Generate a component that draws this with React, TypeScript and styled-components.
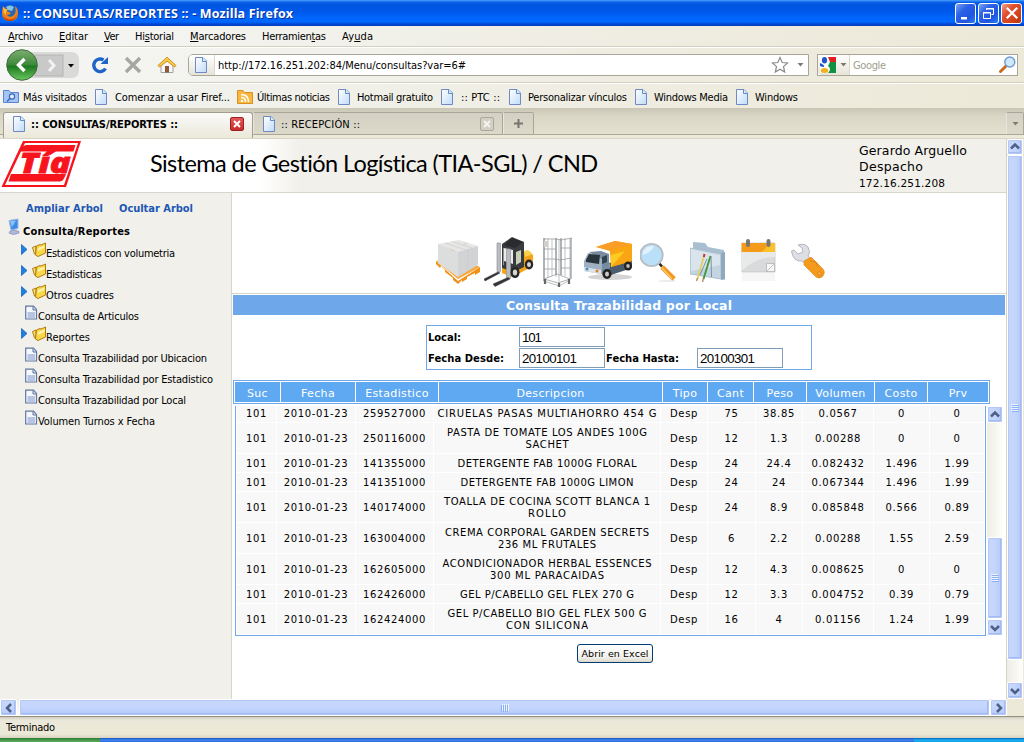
import React, { useLayoutEffect, useRef, useState } from "react";
import styled, { createGlobalStyle, css } from "styled-components";

const tahoma = `"DejaVu Sans Condensed", "DejaVu Sans", sans-serif`;
const verdana = `"DejaVu Sans", sans-serif`;

const Global = createGlobalStyle`
  * { box-sizing: border-box; }
  body { margin: 0; overflow: hidden; background: #ece9d8; font: 11px/14px ${tahoma}; font-stretch: condensed; color: #000; }
  svg { display: block; flex: none; }
`;

/* ---------- text that is tracked to a given measure ---------- */
const Tracked = styled.span`
  display: inline-block;
  white-space: pre;
  flex: none;
  letter-spacing: 0;
`;

function Fit({ w, children }: { w: number; children: React.ReactNode }) {
  const ref = useRef<HTMLSpanElement>(null);
  const [spacing, setSpacing] = useState<number | null>(null);
  useLayoutEffect(() => {
    const el = ref.current;
    if (!el || spacing !== null) return;
    const count = (el.textContent || "").length;
    setSpacing((w - el.getBoundingClientRect().width) / Math.max(1, count - 1));
  }, [w, spacing]);
  return (
    <Tracked ref={ref} style={spacing === null ? undefined : { letterSpacing: spacing, width: w }}>
      {children}
    </Tracked>
  );
}

/* ---------- window frame ---------- */
const Window = styled.div`
  width: 1024px;
  height: 742px;
  display: flex;
  flex-direction: column;
  overflow: hidden;
`;

const TitleBar = styled.header`
  height: 26px;
  flex: none;
  display: flex;
  align-items: center;
  padding: 0 2px 0 1px;
  gap: 4px;
  background: linear-gradient(#3c94fc 0, #3a8ef8 1px, #0a5fe8 2px, #0055e0 5px, #0058ea 12px, #0068fe 18px, #0067ff 22px, #0048d0 24px, #003cc0 26px);
  color: #fff;
  font: bold 12.5px/16px "Open Sans", "Noto Sans", sans-serif;
  text-shadow: 1px 1px 0 #0a2f9a;
`;
const TitleText = styled.div`flex: 1; padding-top: 1px;`;
const Controls = styled.div`display: flex; gap: 2px; text-shadow: none;`;
const ControlButton = styled.span<{ $danger?: boolean }>`
  width: 21px;
  height: 21px;
  border: 1px solid #fff;
  border-radius: 3px;
  display: flex;
  align-items: center;
  justify-content: center;
  background: ${(p) =>
    p.$danger
      ? "linear-gradient(135deg,#f0a088,#e05030 35%,#d04018 75%,#b83010)"
      : "linear-gradient(135deg,#7ba4f4,#2c62e6 35%,#1f56e0 70%,#2a7cf8)"};
`;

const MenuBar = styled.nav`
  height: 22px;
  flex: none;
  display: flex;
  align-items: center;
  padding: 1px 8px 0;
  gap: 16px;
  background: linear-gradient(90deg, #f5f6f5, #efede2 60%, #ece9d8);
  border-bottom: 1px solid #fff;
  box-shadow: inset 0 -1px 0 #d3cfbd;
`;
const NavBar = styled.div`
  height: 36px;
  flex: none;
  display: flex;
  align-items: center;
  padding: 0 6px 2px 5px;
  background: linear-gradient(90deg, #f5f6f5, #efede2 60%, #ece9d8);
  border-bottom: 1px solid #fff;
  box-shadow: inset 0 -1px 0 #d3cfbd;
`;
const NavIcon = styled.div<{ $w: number }>`width: ${(p) => p.$w}px; flex: none;`;
const Field = styled.div<{ $w: number }>`
  width: ${(p) => p.$w}px;
  height: 22px;
  display: flex;
  align-items: center;
  flex: none;
  border: 1px solid #a9a698;
  background: #fff;
`;
const UrlField = styled(Field)`border-radius: 5px 0 0 5px; margin-right: 8px;`;
const Identity = styled.div<{ $w: number }>`
  width: ${(p) => p.$w}px;
  height: 20px;
  display: flex;
  align-items: center;
  justify-content: space-around;
  background: linear-gradient(#fff, #e6e4d8);
  border-right: 1px solid #dcd9cb;
  margin-right: 3px;
  border-radius: 4px 0 0 4px;
`;
const FieldText = styled.div<{ $dim?: boolean }>`flex: 1; padding-top: 2px; color: ${(p) => (p.$dim ? "#a09d8c" : "#000")};`;

const Bookmarks = styled.div`
  height: 24px;
  flex: none;
  display: flex;
  align-items: center;
  padding: 1px 3px 0;
  background: linear-gradient(90deg, #f3f4f1, #efede2 60%, #ece9d8);
`;
const Bookmark = styled.div<{ $w: number; $icon: number }>`
  width: ${(p) => p.$w}px;
  display: flex;
  align-items: center;
  flex: none;
  & > svg { margin-right: ${(p) => p.$icon - 16}px; }
  & > span { padding-top: 2px; }
`;

const TabStrip = styled.div`
  height: 30px;
  flex: none;
  display: flex;
  align-items: flex-end;
  padding: 0 0 0 3px;
  background: linear-gradient(#c9c6b6 0, #d9d6c6 8px, #e3e0d0 25px, #e3e0d0 26px, #aca899 26px, #aca899 27px, #ece9d8 27px);
`;
const Tab = styled.div<{ $w: number; $active?: boolean }>`
  width: ${(p) => p.$w}px;
  height: 26px;
  display: flex;
  align-items: center;
  padding: 0 8px 3px;
  flex: none;
  ${(p) =>
    p.$active
      ? css`
          border: 1px solid #a19e90;
          border-bottom: 0;
          border-radius: 3px 3px 0 0;
          font-weight: bold;
          background: linear-gradient(#fbfbf8, #f2f1ea 50%, #ece9d8);
        `
      : css`
          height: 23px;
          margin-bottom: 3px;
          padding-bottom: 0;
          border: 1px solid #a9a698;
          border-left-color: #fff6;
          border-radius: 2px 2px 0 0;
          background: linear-gradient(#d4d1c4, #dcd9ca);
        `}
`;
const TabLabel = styled.div`flex: 1; padding: 2px 0 0 3px;`;
const TabClose = styled.span<{ $dim?: boolean }>`
  width: 14px;
  height: 14px;
  border-radius: 2px;
  display: flex;
  align-items: center;
  justify-content: center;
  border: 1px solid ${(p) => (p.$dim ? "#aaa79b" : "#a02020")};
  background: ${(p) => (p.$dim ? "#d2cfc4" : "linear-gradient(#e05a5a,#c82c2c)")};
`;
const AddTab = styled(Tab)`justify-content: center; padding: 0;`;
const ListTabs = styled(Tab)`margin-left: auto; justify-content: center; padding: 0;`;

/* ---------- viewport and scroll bars ---------- */
const Viewport = styled.div`
  height: 561px;
  flex: none;
  display: flex;
  border-top: 1px solid #d8d5c8;
`;
const Page = styled.div`
  width: 1007px;
  display: flex;
  flex-direction: column;
  background: #fff;
  border-right: 1px solid #d6d4c8;
`;
const ScrollTrack = styled.div<{ $dir: "row" | "column"; $h?: number }>`
  display: flex;
  flex-direction: ${(p) => p.$dir};
  flex: none;
  ${(p) => (p.$dir === "column" ? "width: 16px;" : "height: 17px;")}
  ${(p) => (p.$h ? `height: ${p.$h}px;` : "")}
  background: ${(p) => (p.$dir === "column" ? "linear-gradient(90deg,#eeede5,#fefefb)" : "linear-gradient(#eeede5,#fefefb)")};
`;
const ScrollPiece = styled.div<{ $w: number; $h: number; $row?: boolean }>`
  width: ${(p) => p.$w}px;
  height: ${(p) => p.$h}px;
  flex: none;
  display: flex;
  align-items: center;
  justify-content: center;
  border: 1px solid #fff;
  border-radius: 2px;
  box-shadow: inset 0 0 0 1px #b4c8f6, inset -1px -1px 0 1px #a3bbf0;
  background: linear-gradient(${(p) => (p.$row ? "180deg" : "90deg")}, #c8d6fb, #c4d5fd 50%, #b5c9f8);
`;
const ScrollSpace = styled.div<{ $size?: number }>`flex: ${(p) => (p.$size !== undefined ? `0 0 ${p.$size}px` : 1)};`;

/* ---------- page ---------- */
const Banner = styled.div`
  height: 54px;
  flex: none;
  display: flex;
  border-bottom: 1px solid #d6d6cc;
  background: linear-gradient(90deg, #fff 260px, #f1f0eb 300px);
`;
const LogoBox = styled.div`width: 150px; padding: 1px 0 0 1px; flex: none;`;
const SystemName = styled.h1`
  margin: 0;
  width: 709px;
  font: 23.5px/49px Lato, "Noto Sans", sans-serif;
`;
const UserInfo = styled.div`
  font: 12.5px/16px ${verdana};
  padding-top: 4px;
  display: flex;
  flex-direction: column;
  align-items: flex-start;
`;
const UserIp = styled.div`font: 10.5px/17px ${verdana};`;

const Columns = styled.div`flex: 1; display: flex; min-height: 0;`;
const Sidebar = styled.aside`
  width: 232px;
  flex: none;
  background: #f1f0eb;
  border-right: 1px solid #d6d6cc;
`;
const TreeLinks = styled.div`
  display: flex;
  gap: 16px;
  padding: 9px 0 0 26px;
  height: 25px;
  font-weight: bold;
  color: #1d57b4;
`;
const TreeRoot = styled.div`
  display: flex;
  height: 24px;
  padding: 0 0 0 8px;
  font-weight: bold;
  gap: 3px;
  & > span { margin-top: 7px; }
`;
const TreeRow = styled.div<{ $leaf?: boolean }>`
  height: 21px;
  display: flex;
  padding-left: ${(p) => (p.$leaf ? 25 : 21)}px;
  & > span { margin-top: 5px; }
`;

const Main = styled.main`flex: 1; display: flex; flex-direction: column;`;
const IconRow = styled.div`
  height: 101px;
  flex: none;
  padding: 44px 0 0 204px;
  display: flex;
  border-bottom: 1px solid #d6d6cc;
`;
const Heading = styled.h2`
  margin: 1px 0 0 1px;
  width: 772px;
  height: 20px;
  flex: none;
  background: #6ea8ea;
  color: #fff;
  font: bold 12.5px/21px ${verdana};
  text-align: center;
`;
const Form = styled.div`
  margin: 10px 0 0 194px;
  width: 386px;
  height: 45px;
  flex: none;
  padding: 1px;
  border: 1px solid #6ea8ea;
  display: flex;
  flex-direction: column;
  gap: 1px;
`;
const FormRow = styled.div`display: flex; align-items: center; height: 20px;`;
const FormLabel = styled.label<{ $w: number }>`
  width: ${(p) => p.$w}px;
  padding-top: 2px;
  font: bold 10px/14px ${verdana};
`;
const Input = styled.div`
  width: 86px;
  height: 20px;
  border: 1px solid #7f9db9;
  padding-left: 2px;
  margin-right: 1px;
  font: 13.3px/19px "Liberation Sans", Arial, sans-serif;
`;

const HeadRow = styled.div`
  margin: 10px 0 0 1px;
  width: 757px;
  height: 24px;
  flex: none;
  padding: 1px;
  border: 1px solid #6ea8ea;
  display: grid;
  grid-template-columns: 45px 74px 82px 223px 44px 45px 52px 67px 52px 60px;
  grid-template-rows: 20px;
  gap: 1px;
`;
const HeadCell = styled.div`
  background: #5fa9f2;
  color: #fff;
  font: 11px/23px ${verdana};
  letter-spacing: 0.35px;
  text-align: center;
`;
const BodyWrap = styled.div`display: flex; margin: 2px 0 0 3px; gap: 1px; flex: none;`;
const Body = styled.div`
  width: 751px;
  height: 230px;
  padding: 0 1px;
  border: 1px solid #6ea8ea;
  border-top: 0;
  display: flex;
  flex-direction: column;
  gap: 1px;
`;
const Row = styled.div<{ $h: number }>`
  height: ${(p) => p.$h}px;
  flex: none;
  display: grid;
  grid-template-columns: 39px 78px 77px 226px 46px 47px 46px 70px 55px 54px;
  gap: 1px;
`;
const Cell = styled.div<{ $clipped?: boolean }>`
  background: #f8f8f8;
  display: flex;
  flex-direction: column;
  align-items: center;
  justify-content: center;
  font: 10px/12px ${verdana};
  letter-spacing: 0.65px;
  white-space: nowrap;
  padding: ${(p) => (p.$clipped ? "0" : "1px 0 0")};
`;
const ExcelButton = styled.button`
  margin: 8px 0 0 345px;
  width: 76px;
  height: 19px;
  padding: 0;
  border: 1px solid #003c74;
  border-radius: 3px;
  background: linear-gradient(#fff, #f2f1ec 70%, #dcd8cb);
  font: 9.5px/15px ${verdana};
`;

const StatusBar = styled.footer`
  height: 22px;
  flex: none;
  border-top: 1px solid #93917f;
  padding: 4px 6px 0;
  background: linear-gradient(#d0cdbf 0, #e9e7da 3px, #ece9d8 8px, #ece9d8 17px, #d8d4c0 21px);
`;
const TaskBar = styled.div`height: 4px; flex: none; display: flex;`;
const TaskPart = styled.div<{ $w: number; $bg: string }>`
  width: ${(p) => p.$w}px;
  background: ${(p) => p.$bg};
`;

/* ---------- drawings ---------- */
const PageIcon = () => (
  <svg width="16" height="16" viewBox="0 0 16 16">
    <defs>
      <linearGradient id="pg" x1="0" y1="0" x2="1" y2="1">
        <stop offset="0" stopColor="#fff" />
        <stop offset="1" stopColor="#bfdcf8" />
      </linearGradient>
    </defs>
    <path d="M1.500.5H9L12.500 4V15.500H1.500Z" fill="url(#pg)" stroke="#7089c4" />
    <path d="M8.500.5V4.500H12.500" fill="#dcebfb" stroke="#5d8fc8" />
  </svg>
);
const FirefoxIcon = () => (
  <svg width="18" height="18" viewBox="0 0 18 18">
    <circle cx="9" cy="8" r="7" fill="#2566b2" />
    <path d="M5 3Q9 0 13 3L11 7L7 6Z" fill="#82c4f0" />
    <path d="M2 2Q1 6 1 9Q1 17 9 17Q17 17 17 9Q17 4 14 2Q16 9 12 12Q8 14 6 11Q9 11 10 9L6 7L7 5H5Z" fill="#f08018" />
    <path d="M2 11Q4 15 9 15.500Q15 15 16 10Q15 17 9 17Q3 17 2 11Z" fill="#c83c08" />
    <path d="M2 3L3 9L5 11L5 7L7 5H4Z" fill="#f8c040" />
  </svg>
);
const BackForward = () => (
  <svg width="76" height="32" viewBox="0 0 76 32">
    <defs>
      <linearGradient id="bk" x1="0" y1="0" x2="0" y2="1">
        <stop offset="0" stopColor="#7fae70" />
        <stop offset=".48" stopColor="#3e8a3c" />
        <stop offset=".55" stopColor="#1e7a20" />
        <stop offset="1" stopColor="#6cc860" />
      </linearGradient>
    </defs>
    <rect x="4" y="3" width="70" height="26" rx="7" fill="#dadad8" />
    <rect x="30" y="6" width="28" height="21" fill="#c8c9c8" stroke="#b5b5b3" />
    <path d="M44 11L49 16.500L44 22" fill="none" stroke="#f2f2f2" strokeWidth="3" />
    <path d="M63 15H69L66 18.500Z" fill="#000" />
    <circle cx="17" cy="16" r="15.300" fill="url(#bk)" stroke="#3f6a3e" />
    <path d="M19.500 10L13.500 16L19.500 22" fill="none" stroke="#fff" strokeWidth="3.400" />
  </svg>
);
const ReloadIcon = () => (
  <svg width="18" height="18" viewBox="0 0 18 18">
    <path d="M14.500 12.500A6.300 6.300 0 1 1 12.500 4" fill="none" stroke="#1d63c8" strokeWidth="3.400" />
    <path d="M9.500 8H17V1Z" fill="#1d63c8" />
  </svg>
);
const StopIcon = () => (
  <svg width="18" height="18" viewBox="0 0 18 18">
    <path d="M2 2L16 16M16 2L2 16" stroke="#a6a6a4" strokeWidth="3.400" />
  </svg>
);
const HomeIcon = () => (
  <svg width="20" height="18" viewBox="0 0 20 18">
    <path d="M4 9V16.500H16V9L10 4Z" fill="#f6f6f8" stroke="#a0a0a8" />
    <rect x="8" y="10" width="4" height="6.500" fill="#8a5a3a" />
    <path d="M1 9.500L10 1.200L19 9.500L17.500 11L10 5L2.500 11Z" fill="#f8cf50" stroke="#d08a10" />
  </svg>
);
const StarIcon = () => (
  <svg width="18" height="18" viewBox="0 0 18 18">
    <path d="M9 1.500L11.200 6.500L16.500 7L12.500 10.600L13.700 16L9 13.200L4.300 16L5.500 10.600L1.500 7L6.800 6.500Z" fill="#fff" stroke="#8a8a8a" strokeWidth="1.200" />
  </svg>
);
const CaretIcon = ({ color = "#7d7b70" }) => (
  <svg width="7" height="4" viewBox="0 0 7 4">
    <path d="M.5 0H6.500L3.500 3.500Z" fill={color} />
  </svg>
);
const GoogleIcon = () => (
  <svg width="16" height="16" viewBox="0 0 16 16">
    <rect width="16" height="16" fill="#fff" />
    <path d="M8 0H16V5H10Z" fill="#e02020" />
    <path d="M10 5H16V16H8Q12 12 8 9Z" fill="#109040" />
    <ellipse cx="4.500" cy="3.200" rx="2.600" ry="3.200" fill="#2255c4" />
    <path d="M0 6Q5 8 4 10Q2 10 0 9Z" fill="#2255c4" />
    <ellipse cx="4.500" cy="13.500" rx="3.800" ry="2.500" fill="#f0b020" />
  </svg>
);
const SearchIcon = () => (
  <svg width="17" height="17" viewBox="0 0 17 17">
    <path d="M1.500 15.500L7 10" stroke="#c86a20" strokeWidth="3" strokeLinecap="round" />
    <circle cx="10.800" cy="6" r="5" fill="#cfe8fb" stroke="#6f9cd0" strokeWidth="1.400" />
  </svg>
);
const MostVisitedIcon = () => (
  <svg width="16" height="16" viewBox="0 0 16 16">
    <path d="M.5 1.500H6L7.500 3.500H15.500V13.500H.5Z" fill="#a4c4f4" stroke="#5a84d0" />
    <circle cx="9" cy="7.500" r="2.600" fill="#e4effc" stroke="#3c68c0" strokeWidth="1.200" />
    <path d="M7 9.500L4 12.500" stroke="#3c68c0" strokeWidth="1.600" />
  </svg>
);
const FeedIcon = () => (
  <svg width="16" height="16" viewBox="0 0 16 16">
    <path d="M.5 1.500H6L7.500 3.500H15.500V14.500H.5Z" fill="#f8b840" stroke="#d89020" />
    <circle cx="5" cy="12" r="1.200" fill="#fff" />
    <path d="M4 8.500Q8.500 8.500 8.500 13M4 5.500Q11.500 5.500 11.500 13" fill="none" stroke="#fff" strokeWidth="1.500" />
  </svg>
);
const Cross = ({ size = 8, color = "#fff", width = 2 }) => (
  <svg width={size} height={size} viewBox="0 0 8 8">
    <path d="M1 1L7 7M7 1L1 7" stroke={color} strokeWidth={width} />
  </svg>
);
const chevrons = { up: "M1 6.500L5 2.500L9 6.500", down: "M1 3L5 7L9 3", left: "M7 1L3 5L7 9", right: "M3 1L7 5L3 9" };
const Chevron = ({ dir }: { dir: keyof typeof chevrons }) => (
  <svg width="10" height="10" viewBox="0 0 10 10">
    <path d={chevrons[dir]} fill="none" stroke="#4d6185" strokeWidth="2.500" />
  </svg>
);
const Grip = ({ row }: { row?: boolean }) => (
  <svg width="8" height="8" viewBox="0 0 8 8">
    <g transform={row ? "rotate(90 4 4)" : undefined}>
      <path d="M0 .5H7M0 2.500H7M0 4.500H7M0 6.500H7" stroke="#eef4fe" />
      <path d="M1 1.500H8M1 3.500H8M1 5.500H8M1 7.500H8" stroke="#8cb0f8" />
    </g>
  </svg>
);

const LogoText = styled.text`
  font: italic 900 28px "Open Sans", "Liberation Sans", sans-serif;
`;
const TiaLogo = () => (
  <svg width="81" height="48" viewBox="0 0 81 48">
    <path d="M22 1H80L65 47H.500Z" fill="#f8141c" />
    <path d="M24 3H77L63 45H4Z" fill="#fff" />
    <path d="M25 5H74.500L72.500 11.500H18.500Q20 6.500 25 5Z" fill="#f8141c" />
    <path d="M10 34H65Q62.500 41.500 59 41.500H7.500Z" fill="#f8141c" />
    <LogoText x="18.500" y="32.500" textLength="51" lengthAdjust="spacingAndGlyphs" fill="#f8141c" stroke="#f8141c" strokeWidth=".8">Tía</LogoText>
  </svg>
);

const ComputerIcon = () => (
  <svg width="12" height="17" viewBox="0 0 12 17">
    <path d="M1 2.500L10 1V10.500L3 12Z" fill="#3f8be8" stroke="#9cb8e0" />
    <path d="M2 3L8 2.500L4 9Z" fill="#8cc4fa" />
    <path d="M2 13Q6 11 11 13.500V15Q5 18 1 15Z" fill="#b0b8dc" stroke="#8088b8" strokeWidth=".6" />
  </svg>
);
const ArrowIcon = () => (
  <svg width="11" height="21" viewBox="0 0 11 21">
    <path d="M.5 2.500L6 7.500L.5 12.500Z" fill="#1c80e0" stroke="#1a66c0" strokeWidth=".8" />
  </svg>
);
const FolderIcon = () => (
  <svg width="14" height="16" viewBox="0 0 14 16">
    <path d="M.5 5.500L4 4V13L2.500 12Z" fill="#f8e080" stroke="#b07c10" />
    <path d="M4.500 4L8 2.500L9 3L13.500 1V11L6 14.500L3.500 13Z" fill="#f8d848" stroke="#b07c10" />
    <path d="M6 6L12.500 3.500V6L5.500 9Z" fill="#fdf2a8" />
  </svg>
);
const DocIcon = () => (
  <svg width="13" height="16" viewBox="0 0 13 16">
    <path d="M.7 1.200H8.500L11.500 4.500V14H.7Z" fill="#f4f7fd" stroke="#60779f" strokeWidth="1.200" />
    <path d="M8 1.500V5H11.500" fill="#cfdaee" stroke="#60779f" />
    <path d="M2.500 8H10M2.500 10H10M2.500 12H10" stroke="#a3b4dc" strokeWidth="1.400" />
  </svg>
);

const PalletIcon = () => (
  <svg width="48" height="50" viewBox="0 0 48 50">
    <path d="M0 24L22 44L44 30V35L39 38V36L31 40V42L26 45V43L22 47L17 43V41L9 35V33L5 29L4 31L0 27Z" fill="#f29018" />
    <path d="M0 24L22 42L44 30L22 20Z" fill="#f8a838" />
    <path d="M2 7L23 3L42 9L22 16Z" fill="#e6e6e6" />
    <path d="M2 7L22 15V40L2 26Z" fill="#dcdddd" />
    <path d="M22 15L42 9V28L22 40Z" fill="#d2d3d4" />
    <path d="M9 6L30 13M16 4.500L36 11M32 12V34" stroke="#c9c9c6" strokeWidth=".6" fill="none" />
    <path d="M14 12L19 14M27 8L31 6" stroke="#dcc4a4" strokeWidth=".8" />
  </svg>
);
const ForkliftIcon = () => (
  <svg width="59" height="52" viewBox="0 0 59 52">
    <path d="M37 17L43 14L49 18V29L38 35L28 40L18 36V28L34 30Z" fill="#f5a318" />
    <path d="M40 14L44 13L49 17L41 20Z" fill="#fbd050" />
    <path d="M18 7L28 0L40 5V30L30 35L18 31Z" fill="#3a3b3f" />
    <path d="M20 8L28 1L39 5L31 11Z" fill="#2a2b2e" />
    <path d="M19.500 11L29 13V31L19.500 28Z" fill="#ebebe8" />
    <path d="M20 24L29 27V33L20 30Z" fill="#3a3b3f" />
    <path d="M32 15L37 13V25L32 28Z" fill="#c8d0b8" />
    <path d="M13 6H16.500V34.500H13ZM22.500 12H26.500V41.500H22.500Z" fill="#b9bcc0" stroke="#94989c" strokeWidth=".7" />
    <path d="M0 42L14 35L16 36L1 44ZM9 47L24 40.500L26 42L11 49.500Z" fill="#333539" stroke="#333539" strokeWidth=".5" />
    <ellipse cx="31" cy="35.500" rx="4.500" ry="5.500" fill="#25272a" />
    <ellipse cx="31" cy="35.500" rx="2.200" ry="3" fill="#d6d6d0" />
    <ellipse cx="45" cy="27.500" rx="4.200" ry="5" fill="#25272a" />
    <ellipse cx="45" cy="27.500" rx="2" ry="2.500" fill="#d6d6d0" />
  </svg>
);
const CageIcon = () => (
  <svg width="40" height="52" viewBox="0 0 40 52">
    <path d="M1 1V44L16 49L27 43V2M13 1V40M18 2V38M16 2V48M5 1V41M9 2V39M22 1V39" fill="none" stroke="#a2a6aa" strokeWidth=".7" />
    <path d="M1 2H13L18 3L29 1M1 12H13M18 11H28M1 22H13L17 23L28 21M1 32H13M18 31H28M1 42L14 37L27 42L15 46Z" fill="none" stroke="#a4a8ab" strokeWidth=".9" />
    <path d="M1 1V44M13 1V38M18 1V38M28 1V42" stroke="#8a8e92" strokeWidth="1.100" />
    <path d="M2 42V47M16 46V50M26 42V47" stroke="#666" strokeWidth="2.200" />
    <rect x="1" y="4" width="4" height="6" fill="#d0d0c8" />
  </svg>
);
const TruckIcon = () => (
  <svg width="57" height="48" viewBox="0 0 57 48">
    <ellipse cx="27" cy="40" rx="22" ry="3" fill="#b8b8b8" opacity=".6" />
    <path d="M25 26L49 22V31L25 39Z" fill="#4b5d6c" />
    <path d="M13 10L32 4L49 7V24L28 30L27 14Z" fill="#f59a13" />
    <path d="M13 10L32 4L49 7L28 13Z" fill="#fb9e28" />
    <path d="M28 13L49 7V24L28 30Z" fill="#f9a514" />
    <path d="M28 18L42 14L28 30Z" fill="#fccb20" />
    <path d="M1 24L5 16L24 17L27 29L24 38L1 34Z" fill="#9eb0c2" />
    <path d="M6 15L18 14L26 17V33L19 38V22Z" fill="#768b9f" />
    <path d="M3 23L6 17L17 18L16 27L3 25Z" fill="#29343d" />
    <path d="M19 20L24 18V25L19 27Z" fill="#32424f" />
    <path d="M1 30L18 33V37L1 34Z" fill="#dbe2e8" />
    <circle cx="4" cy="32" r="1.500" fill="#488ac4" /><circle cx="14" cy="34" r="1.500" fill="#e08020" />
    <ellipse cx="24" cy="37" rx="4.500" ry="5" fill="#222" /><ellipse cx="24" cy="37" rx="2" ry="2.500" fill="#ccc" />
    <ellipse cx="45" cy="29" rx="4" ry="4.500" fill="#222" /><ellipse cx="45" cy="29" rx="1.800" ry="2" fill="#bbb" />
  </svg>
);
const MagnifierIcon = () => (
  <svg width="50" height="48" viewBox="0 0 50 48">
    <ellipse cx="27" cy="44" rx="9" ry="1" fill="#ececec" />
    <path d="M22 30L34 42" stroke="#f29a20" strokeWidth="5" />
    <path d="M21 30L32 42" stroke="#fcc878" strokeWidth="1.200" />
    <path d="M18 25L22 29.500" stroke="#222" strokeWidth="2.500" />
    <circle cx="11.500" cy="18" r="11.200" fill="#b9dff9" stroke="#b7bdc2" strokeWidth="1.800" />
    <path d="M3 15Q6 8 14 9Q12 15 3 18Z" fill="#e3f3fd" />
  </svg>
);
const FolderPencilsIcon = () => (
  <svg width="51" height="48" viewBox="0 0 51 48">
    <path d="M3 5L15 6L18 10L34 13V40L3 33Z" fill="#a9becf" />
    <path d="M0 11L31 17L35 43L0 37Z" fill="#bed0df" />
    <path d="M0 11L31 17V42L0 37Z" fill="#c4d4e1" stroke="#a8bbcb" strokeWidth=".8" />
    <path d="M1 12L30 18V28L1 34Z" fill="#d9e4ed" />
    <path d="M31 16L35 15V42L31 43Z" fill="#8fa8bd" />
    <path d="M14 19L7.500 42" stroke="#e6cf60" strokeWidth="1.800" /><path d="M14.500 17L13.800 20" stroke="#d03020" strokeWidth="2" />
    <path d="M20.500 19L13.500 42" stroke="#3f9a3a" strokeWidth="1.900" /><path d="M21 19L21.500 40M17 22L10 38" stroke="#7d919e" strokeWidth="1" />
    <path d="M7.500 41L6.500 44M13.500 41L12.500 45" stroke="#b08858" strokeWidth="1.300" />
  </svg>
);
const CalendarIcon = () => (
  <svg width="50" height="48" viewBox="0 0 50 48">
    <path d="M1 36H34V44H1Z" fill="#f6f6f6" />
    <path d="M1 6H34V35H1Z" fill="#d9dadb" stroke="#c3c4c5" strokeWidth=".8" />
    <path d="M1 14H34V20Q14 20 1 34Z" fill="#e8e9e9" />
    <path d="M.5 6H34V15H.5Z" fill="#f59b1a" /><path d="M26 6H34V15H20Q26 12 26 6Z" fill="#fbc12a" />
    <path d="M25.500 26.500H33.500V34.500H25.500Z" fill="#f8f8f8" stroke="#b4b4b4" strokeWidth=".8" /><path d="M25.500 34.500L33.500 26.500" stroke="#b4b4b4" strokeWidth=".8" />
    <rect x="5" y="2" width="4" height="8" rx="2" fill="#777" /><rect x="25.500" y="2" width="4" height="8" rx="2" fill="#777" />
  </svg>
);
const WrenchIcon = () => (
  <svg width="36" height="48" viewBox="0 0 36 48">
    <path d="M7 8Q14 6 17 10Q20 15 17 19L20 23L15 27L11 24Q2 25 .5 14L3 13L7 17L12 15L11 11Z" fill="#dddfe4" stroke="#aeb1b9" strokeWidth=".9" />
    <path d="M13 24L20 20L32 32Q35 36 31 40Q28 42 25 40L13 28Z" fill="#f49a1c" stroke="#db8210" strokeWidth=".6" />
    <path d="M19 24L25 25L27 30" fill="none" stroke="#dc8410" strokeWidth="1" />
    <circle cx="28.500" cy="36.500" r="1.800" fill="#fbb040" stroke="#c87412" strokeWidth=".6" />
  </svg>
);

/* ---------- data ---------- */
const bookmarks: [number, number, () => React.JSX.Element, string, number][] = [
  [91, 20, MostVisitedIcon, "Más visitados", 64],
  [143, 21, PageIcon, "Comenzar a usar Firef...", 115],
  [100, 20, FeedIcon, "Últimas noticias", 73],
  [103, 20, PageIcon, "Hotmail gratuito", 76],
  [68, 21, PageIcon, ":: PTC ::", 39],
  [126, 20, PageIcon, "Personalizar vínculos", 99],
  [101, 20, PageIcon, "Windows Media", 74],
  [80, 20, PageIcon, "Windows", 43],
];

const tree: { leaf?: boolean; text: string; w: number }[] = [
  { text: "Estadisticos con volumetria", w: 129 },
  { text: "Estadisticas", w: 56 },
  { text: "Otros cuadres", w: 68 },
  { leaf: true, text: "Consulta de Articulos", w: 101 },
  { text: "Reportes", w: 44 },
  { leaf: true, text: "Consulta Trazabilidad por Ubicacion", w: 169 },
  { leaf: true, text: "Consulta Trazabilidad por Estadistico", w: 175 },
  { leaf: true, text: "Consulta Trazabilidad por Local", w: 148 },
  { leaf: true, text: "Volumen Turnos x Fecha", w: 117 },
];

const headers = ["Suc", "Fecha", "Estadistico", "Descripcion", "Tipo", "Cant", "Peso", "Volumen", "Costo", "Prv"];

type Line = [string, number];
const rows: { id: string; desc: Line[]; vals: string[] }[] = [
  { id: "259527000", desc: [["CIRUELAS PASAS MULTIAHORRO 454 G", 219]], vals: ["75", "38.85", "0.0567", "0", "0"] },
  { id: "250116000", desc: [["PASTA DE TOMATE LOS ANDES 100G", 200], ["SACHET", 43]], vals: ["12", "1.3", "0.00288", "0", "0"] },
  { id: "141355000", desc: [["DETERGENTE FAB 1000G FLORAL", 179]], vals: ["24", "24.4", "0.082432", "1.496", "1.99"] },
  { id: "141351000", desc: [["DETERGENTE FAB 1000G LIMON", 173]], vals: ["24", "24", "0.067344", "1.496", "1.99"] },
  { id: "140174000", desc: [["TOALLA DE COCINA SCOTT BLANCA 1", 206], ["ROLLO", 38]], vals: ["24", "8.9", "0.085848", "0.566", "0.89"] },
  { id: "163004000", desc: [["CREMA CORPORAL GARDEN SECRETS", 204], ["236 ML FRUTALES", 98]], vals: ["6", "2.2", "0.00288", "1.55", "2.59"] },
  { id: "162605000", desc: [["ACONDICIONADOR HERBAL ESSENCES", 209], ["300 ML PARACAIDAS", 114]], vals: ["12", "4.3", "0.008625", "0", "0"] },
  { id: "162426000", desc: [["GEL P/CABELLO GEL FLEX 270 G", 174]], vals: ["12", "3.3", "0.004752", "0.39", "0.79"] },
  { id: "162424000", desc: [["GEL P/CABELLO BIO GEL FLEX 500 G", 199], ["CON SILICONA", 82]], vals: ["16", "4", "0.01156", "1.24", "1.99"] },
];

export default function App() {
  return (
    <Window>
      <Global />
      <TitleBar>
        <FirefoxIcon />
        <TitleText><Fit w={270}>:: CONSULTAS/REPORTES :: - Mozilla Firefox</Fit></TitleText>
        <Controls>
          <ControlButton><svg width="15" height="15"><path d="M3 11H9V13.500H3Z" fill="#fff" /></svg></ControlButton>
          <ControlButton>
            <svg width="15" height="15" fill="none" stroke="#fff"><path d="M5.500 4V2.500H12.500V8.500H10.500M5 3H13M2.500 6.500H9.500V12.500H2.500ZM2 7H10" /></svg>
          </ControlButton>
          <ControlButton $danger><Cross size={14} width={1.300} /></ControlButton>
        </Controls>
      </TitleBar>
      <MenuBar>
        <Fit w={35}><u>A</u>rchivo</Fit>
        <Fit w={29}><u>E</u>ditar</Fit>
        <Fit w={15}><u>V</u>er</Fit>
        <Fit w={39}>Hi<u>s</u>torial</Fit>
        <Fit w={56}><u>M</u>arcadores</Fit>
        <Fit w={64}>Herramien<u>t</u>as</Fit>
        <Fit w={31}>Ay<u>u</u>da</Fit>
      </MenuBar>
      <NavBar>
        <NavIcon $w={86}><BackForward /></NavIcon>
        <NavIcon $w={33}><ReloadIcon /></NavIcon>
        <NavIcon $w={33}><StopIcon /></NavIcon>
        <NavIcon $w={31}><HomeIcon /></NavIcon>
        <UrlField $w={621}>
          <Identity $w={26}><PageIcon /></Identity>
          <FieldText><Fit w={248}>http://172.16.251.202:84/Menu/consultas?var=6#</Fit></FieldText>
          <NavIcon $w={26}><StarIcon /></NavIcon>
          <NavIcon $w={11}><CaretIcon /></NavIcon>
        </UrlField>
        <Field $w={201}>
          <Identity $w={32}><GoogleIcon /><CaretIcon /></Identity>
          <FieldText $dim><Fit w={33}>Google</Fit></FieldText>
          <NavIcon $w={18}><SearchIcon /></NavIcon>
        </Field>
      </NavBar>
      <Bookmarks>
        {bookmarks.map(([w, icon, Icon, label, tw]) => (
          <Bookmark key={label} $w={w} $icon={icon}><Icon /><Fit w={tw}>{label}</Fit></Bookmark>
        ))}
      </Bookmarks>
      <TabStrip>
        <Tab $w={250} $active>
          <PageIcon />
          <TabLabel><Fit w={147}>:: CONSULTAS/REPORTES ::</Fit></TabLabel>
          <TabClose><Cross /></TabClose>
        </Tab>
        <Tab $w={250}>
          <PageIcon />
          <TabLabel><Fit w={79}>:: RECEPCIÓN ::</Fit></TabLabel>
          <TabClose $dim><Cross color="#f4f3ee" /></TabClose>
        </Tab>
        <AddTab $w={31}><svg width="9" height="9"><path d="M4.500 0V9M0 4.500H9" stroke="#77756c" strokeWidth="2" /></svg></AddTab>
        <ListTabs $w={18}><CaretIcon /></ListTabs>
      </TabStrip>

      <Viewport>
        <Page>
          <Banner>
            <LogoBox><TiaLogo /></LogoBox>
            <SystemName><Fit w={449}>Sistema de Gestión Logística (TIA-SGL) / CND</Fit></SystemName>
            <UserInfo>
              <Fit w={108}>Gerardo Arguello</Fit>
              <Fit w={64}>Despacho</Fit>
              <UserIp><Fit w={86}>172.16.251.208</Fit></UserIp>
            </UserInfo>
          </Banner>
          <Columns>
            <Sidebar>
              <TreeLinks><Fit w={77}>Ampliar Arbol</Fit><Fit w={74}>Ocultar Arbol</Fit></TreeLinks>
              <TreeRoot><ComputerIcon /><Fit w={107}>Consulta/Reportes</Fit></TreeRoot>
              {tree.map((t) => (
                <TreeRow key={t.text} $leaf={t.leaf}>
                  {t.leaf ? <DocIcon /> : <><ArrowIcon /><FolderIcon /></>}
                  <Fit w={t.w}>{t.text}</Fit>
                </TreeRow>
              ))}
            </Sidebar>
            <Main>
              <IconRow>
                <PalletIcon /><ForkliftIcon /><CageIcon /><TruckIcon />
                <MagnifierIcon /><FolderPencilsIcon /><CalendarIcon /><WrenchIcon />
              </IconRow>
              <Heading><Fit w={226}>Consulta Trazabilidad por Local</Fit></Heading>
              <Form>
                <FormRow>
                  <FormLabel $w={91}><Fit w={33}>Local:</Fit></FormLabel>
                  <Input><Fit w={20}>101</Fit></Input>
                </FormRow>
                <FormRow>
                  <FormLabel $w={91}><Fit w={76}>Fecha Desde:</Fit></FormLabel>
                  <Input><Fit w={55}>20100101</Fit></Input>
                  <FormLabel $w={91}><Fit w={73}>Fecha Hasta:</Fit></FormLabel>
                  <Input><Fit w={55}>20100301</Fit></Input>
                </FormRow>
              </Form>
              <HeadRow>{headers.map((h) => <HeadCell key={h}>{h}</HeadCell>)}</HeadRow>
              <BodyWrap>
                <Body>
                  {rows.map((r, i) => (
                    <Row key={r.id} $h={i === 0 ? 16 : r.desc.length > 1 ? 30 : 18}>
                      <Cell $clipped={i === 0}>101</Cell>
                      <Cell $clipped={i === 0}>2010-01-23</Cell>
                      <Cell $clipped={i === 0}>{r.id}</Cell>
                      <Cell $clipped={i === 0}>{r.desc.map(([t, w]) => <Fit key={t} w={w}>{t}</Fit>)}</Cell>
                      <Cell $clipped={i === 0}>Desp</Cell>
                      {r.vals.map((v, j) => <Cell key={j} $clipped={i === 0}>{v}</Cell>)}
                    </Row>
                  ))}
                </Body>
                <ScrollTrack $dir="column" $h={230}>
                  <ScrollPiece $w={16} $h={17}><Chevron dir="up" /></ScrollPiece>
                  <ScrollSpace />
                  <ScrollPiece $w={16} $h={82}><Grip /></ScrollPiece>
                  <ScrollPiece $w={16} $h={17}><Chevron dir="down" /></ScrollPiece>
                </ScrollTrack>
              </BodyWrap>
              <ExcelButton><Fit w={67}>Abrir en Excel</Fit></ExcelButton>
            </Main>
          </Columns>
        </Page>
        <ScrollTrack $dir="column">
          <ScrollPiece $w={16} $h={16}><Chevron dir="up" /></ScrollPiece>
          <ScrollPiece $w={16} $h={505}><Grip /></ScrollPiece>
          <ScrollSpace />
          <ScrollPiece $w={16} $h={17}><Chevron dir="down" /></ScrollPiece>
        </ScrollTrack>
      </Viewport>
      <ScrollTrack $dir="row">
        <ScrollPiece $w={17} $h={17} $row><Chevron dir="left" /></ScrollPiece>
        <ScrollSpace $size={2} />
        <ScrollPiece $w={971} $h={17} $row><Grip row /></ScrollPiece>
        <ScrollPiece $w={17} $h={17} $row><Chevron dir="right" /></ScrollPiece>
        <TaskPart $w={17} $bg="#ece9d8" />
      </ScrollTrack>
      <StatusBar><Fit w={49}>Terminado</Fit></StatusBar>
      <TaskBar>
        <TaskPart $w={100} $bg="linear-gradient(#2f7d35,#5cb05c)" />
        <TaskPart $w={814} $bg="linear-gradient(#1f4fc0,#3d8af0 50%,#2a66dc)" />
        <TaskPart $w={110} $bg="linear-gradient(#0c5cb8,#18b4f4 50%,#12a0ec)" />
      </TaskBar>
    </Window>
  );
}
